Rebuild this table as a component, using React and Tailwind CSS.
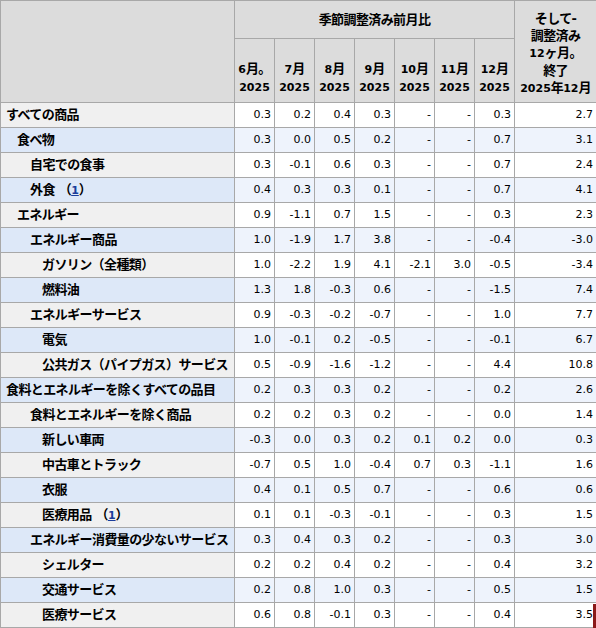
const months = ["6", "7", "8", "9", "10", "11", "12"];

const rows = [
  { label: "すべての商品", indent: 0, v: ["0.3", "0.2", "0.4", "0.3", "-", "-", "0.3"], y: "2.7" },
  { label: "食べ物", indent: 1, v: ["0.3", "0.0", "0.5", "0.2", "-", "-", "0.7"], y: "3.1" },
  { label: "自宅での食事", indent: 2, v: ["0.3", "-0.1", "0.6", "0.3", "-", "-", "0.7"], y: "2.4" },
  { label: "外食", note: true, indent: 2, v: ["0.4", "0.3", "0.3", "0.1", "-", "-", "0.7"], y: "4.1" },
  { label: "エネルギー", indent: 1, v: ["0.9", "-1.1", "0.7", "1.5", "-", "-", "0.3"], y: "2.3" },
  { label: "エネルギー商品", indent: 2, v: ["1.0", "-1.9", "1.7", "3.8", "-", "-", "-0.4"], y: "-3.0" },
  { label: "ガソリン（全種類）", indent: 3, v: ["1.0", "-2.2", "1.9", "4.1", "-2.1", "3.0", "-0.5"], y: "-3.4" },
  { label: "燃料油", indent: 3, v: ["1.3", "1.8", "-0.3", "0.6", "-", "-", "-1.5"], y: "7.4" },
  { label: "エネルギーサービス", indent: 2, v: ["0.9", "-0.3", "-0.2", "-0.7", "-", "-", "1.0"], y: "7.7" },
  { label: "電気", indent: 3, v: ["1.0", "-0.1", "0.2", "-0.5", "-", "-", "-0.1"], y: "6.7" },
  { label: "公共ガス（パイプガス）サービス", indent: 3, v: ["0.5", "-0.9", "-1.6", "-1.2", "-", "-", "4.4"], y: "10.8" },
  { label: "食料とエネルギーを除くすべての品目", indent: 0, v: ["0.2", "0.3", "0.3", "0.2", "-", "-", "0.2"], y: "2.6" },
  { label: "食料とエネルギーを除く商品", indent: 2, v: ["0.2", "0.2", "0.3", "0.2", "-", "-", "0.0"], y: "1.4" },
  { label: "新しい車両", indent: 3, v: ["-0.3", "0.0", "0.3", "0.2", "0.1", "0.2", "0.0"], y: "0.3" },
  { label: "中古車とトラック", indent: 3, v: ["-0.7", "0.5", "1.0", "-0.4", "0.7", "0.3", "-1.1"], y: "1.6" },
  { label: "衣服", indent: 3, v: ["0.4", "0.1", "0.5", "0.7", "-", "-", "0.6"], y: "0.6" },
  { label: "医療用品", note: true, indent: 3, v: ["0.1", "0.1", "-0.3", "-0.1", "-", "-", "0.3"], y: "1.5" },
  { label: "エネルギー消費量の少ないサービス", indent: 2, v: ["0.3", "0.4", "0.3", "0.2", "-", "-", "0.3"], y: "3.0" },
  { label: "シェルター", indent: 3, v: ["0.2", "0.2", "0.4", "0.2", "-", "-", "0.4"], y: "3.2" },
  { label: "交通サービス", indent: 3, v: ["0.2", "0.8", "1.0", "0.3", "-", "-", "0.5"], y: "1.5" },
  { label: "医療サービス", indent: 3, v: ["0.6", "0.8", "-0.1", "0.3", "-", "-", "0.4"], y: "3.5" },
];

const indentPad = ["pl-[5px]", "pl-[16px]", "pl-[29px]", "pl-[41px]"];

// Japanese glyphs sit a bit larger than the digits in the source table
const jp = "text-[13px] tracking-[-0.6px]";

export default function App() {
  return (
    <div
      className="relative w-[596px] h-[628px] overflow-hidden bg-white text-black"
      style={{ fontFamily: '"DejaVu Sans", "Noto Sans CJK JP", sans-serif' }}
    >
      <table className="table-fixed border-collapse w-[602px] text-[11px]">
        <colgroup>
          <col className="w-[234px]" />
          {months.map((m) => (
            <col key={m} className="w-[40px]" />
          ))}
          <col className="w-[88px]" />
        </colgroup>
        <thead>
          <tr className="h-[38px]">
            <th rowSpan={2} className="border border-[#a8a8a8] bg-[#dcdcdc]"></th>
            <th colSpan={7} className={`border border-[#a8a8a8] bg-[#dcdcdc] font-bold text-center ${jp}`}>
              季節調整済み前月比
            </th>
            <th
              rowSpan={2}
              className="border border-[#a8a8a8] bg-[#dcdcdc] font-bold text-center align-bottom pb-[5px] pr-[6px] leading-[17px]"
            >
              <div className={jp}>そして-</div>
              <div className={jp}>調整済み</div>
              <div>
                12<span className={jp}>ヶ月。</span>
              </div>
              <div className={jp}>終了</div>
              <div>
                2025<span className={jp}>年</span>12<span className={jp}>月</span>
              </div>
            </th>
          </tr>
          <tr className="h-[64px]">
            {months.map((m, i) => (
              <th
                key={m}
                className="border border-[#a8a8a8] bg-[#dcdcdc] font-bold text-center align-bottom pb-[5px] leading-[18px] whitespace-nowrap"
              >
                <div>
                  {m}
                  <span className={jp}>{i === 0 ? "月。" : "月"}</span>
                </div>
                <div>2025</div>
              </th>
            ))}
          </tr>
        </thead>
        <tbody>
          {rows.map((r, i) => {
            const alt = i % 2 === 1;
            return (
              <tr key={r.label} className="h-[25px]">
                <th
                  className={`border border-[#a8a8a8] text-left font-bold whitespace-nowrap ${jp} ${indentPad[r.indent]} ${
                    alt ? "bg-[#dde8f8]" : "bg-[#f0f0f0]"
                  }`}
                >
                  {r.label}
                  {r.note && (
                    <span>
                      {" "}
                      （<span className="text-[11px] tracking-normal text-[#1a3d9b] underline">1</span>）
                    </span>
                  )}
                </th>
                {r.v.map((val, j) => (
                  <td
                    key={j}
                    className={`border border-[#a8a8a8] text-right pr-[3px] ${alt ? "bg-[#eef3fc]" : "bg-white"}`}
                  >
                    {val}
                  </td>
                ))}
                <td
                  className={`border border-[#a8a8a8] text-right pr-[9px] ${alt ? "bg-[#eef3fc]" : "bg-white"}`}
                >
                  {r.y}
                </td>
              </tr>
            );
          })}
        </tbody>
      </table>
      <div className="absolute right-0 bottom-0 w-[3px] h-[24px] bg-[#8b1a1a]"></div>
    </div>
  );
}
